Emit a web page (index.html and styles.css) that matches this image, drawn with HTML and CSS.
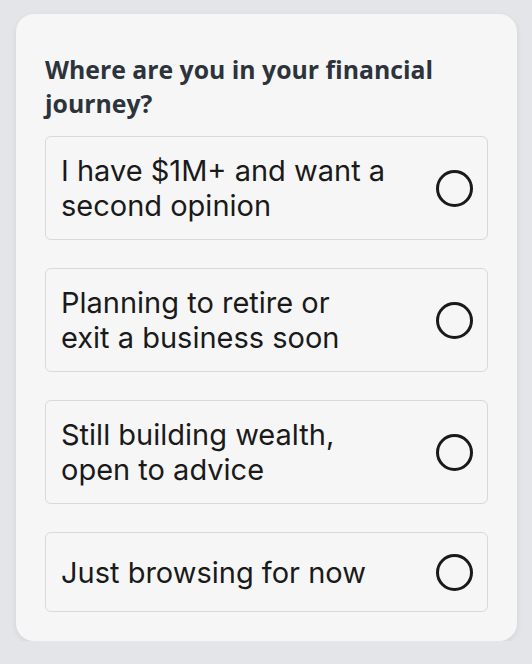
FILE: index.html
```html
<!DOCTYPE html>
<html lang="en">
<head>
  <meta charset="UTF-8" />
  <title>Financial journey</title>
  <link rel="stylesheet" href="styles.css">
</head>
<body>

  <!-- Quiz card -->
  <div class="quiz-card">
    <h2 class="quiz-title">Where are you in your financial journey?</h2>

    <div class="options">
      <label class="option">
        <span class="option-text">I have $1M+ and want a<br>second opinion</span>
        <span class="radio"></span>
      </label>
      <label class="option">
        <span class="option-text">Planning to retire or<br>exit a business soon</span>
        <span class="radio"></span>
      </label>
      <label class="option">
        <span class="option-text">Still building wealth,<br>open to advice</span>
        <span class="radio"></span>
      </label>
      <label class="option">
        <span class="option-text">Just browsing for now</span>
        <span class="radio"></span>
      </label>
    </div>
  </div>

</body>
</html>
```

FILE: styles.css
```css
body {
  margin: 0;
  padding: 14px 15px 0 16px;
  background: #e4e5e8;
  font-family: 'Inter', 'Liberation Sans', sans-serif;
}

.quiz-card {
  background: #f6f6f6;
  border-radius: 18px;
  padding: 38px 29px 29px 29px;
  box-shadow: 0 2px 6px rgba(0, 0, 0, 0.08);
}

.quiz-title {
  margin: 0 0 16px 0;
  font-family: 'Open Sans', 'Noto Sans', sans-serif;
  font-weight: 700;
  font-size: 24.8px;
  line-height: 34px;
  color: #2c333b;
  padding-right: 30px;
}

.options {
  display: flex;
  flex-direction: column;
  gap: 28px;
}

.option {
  display: flex;
  align-items: center;
  justify-content: space-between;
  gap: 20px;
  min-height: 80px;
  box-sizing: border-box;
  padding: 16px 14px 16px 15px;
  border: 1px solid #d6d9df;
  border-radius: 6px;
  background: #f6f6f6;
  cursor: pointer;
}

.option-text {
  font-size: 29px;
  line-height: 35px;
  color: #1a1a1a;
}

.radio {
  flex: none;
  width: 37px;
  height: 37px;
  box-sizing: border-box;
  border: 3px solid #1a1a1a;
  border-radius: 50%;
}
```
